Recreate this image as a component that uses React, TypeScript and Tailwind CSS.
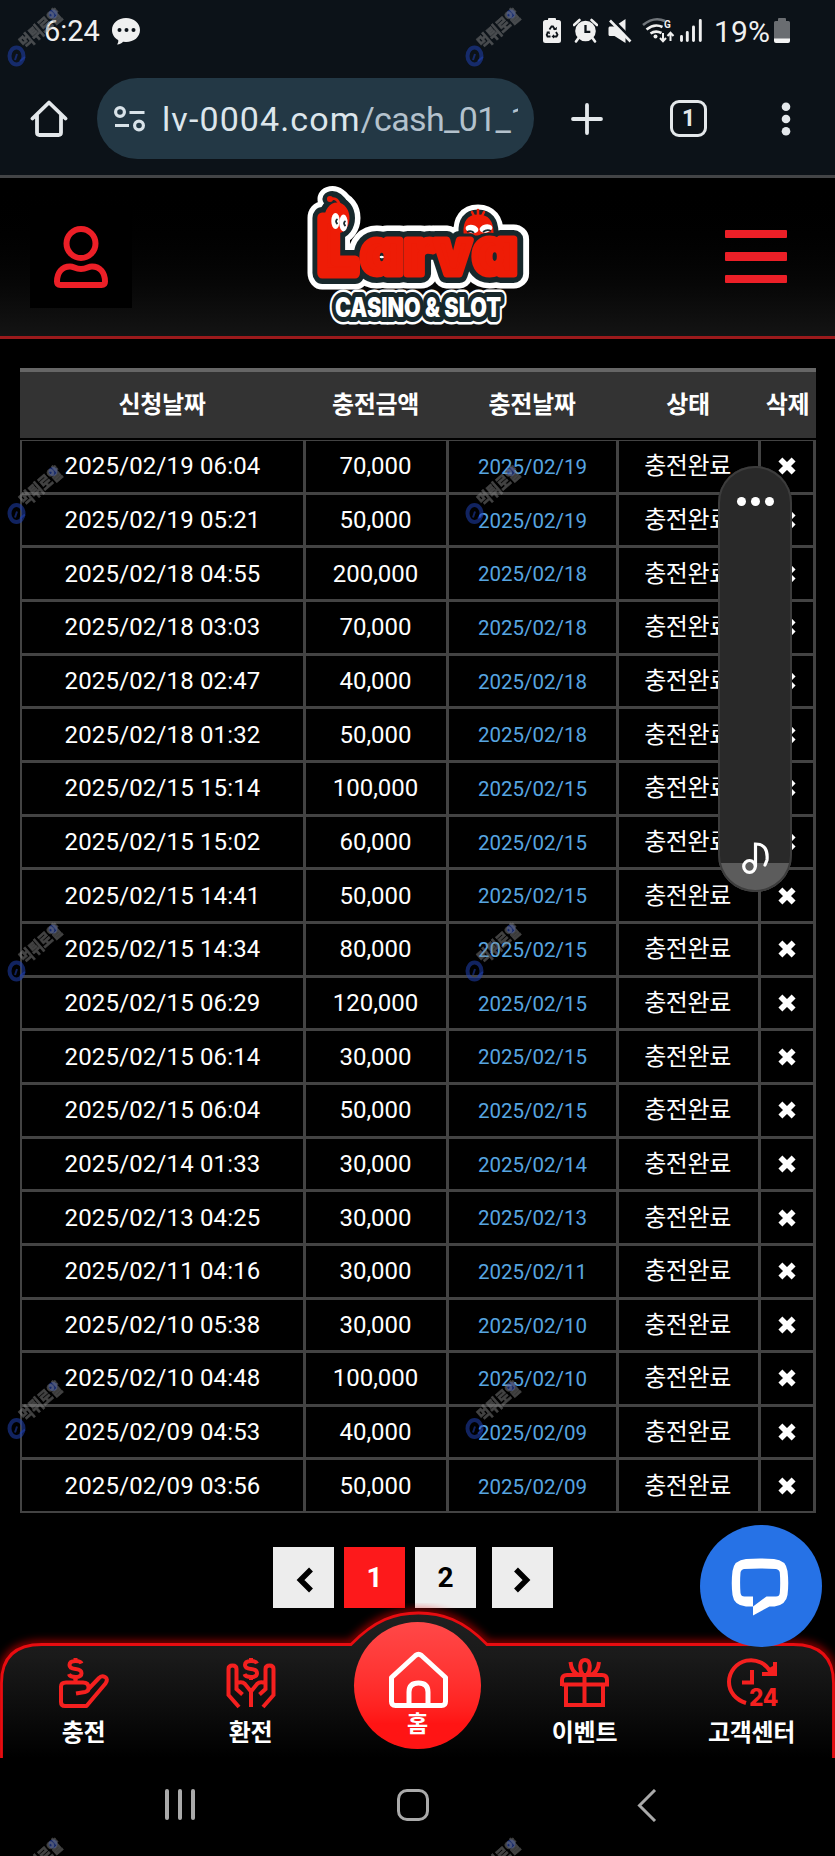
import React from "react";

const rows: [string, string][] = [
  ["2025/02/19 06:04", "70,000"],
  ["2025/02/19 05:21", "50,000"],
  ["2025/02/18 04:55", "200,000"],
  ["2025/02/18 03:03", "70,000"],
  ["2025/02/18 02:47", "40,000"],
  ["2025/02/18 01:32", "50,000"],
  ["2025/02/15 15:14", "100,000"],
  ["2025/02/15 15:02", "60,000"],
  ["2025/02/15 14:41", "50,000"],
  ["2025/02/15 14:34", "80,000"],
  ["2025/02/15 06:29", "120,000"],
  ["2025/02/15 06:14", "30,000"],
  ["2025/02/15 06:04", "50,000"],
  ["2025/02/14 01:33", "30,000"],
  ["2025/02/13 04:25", "30,000"],
  ["2025/02/11 04:16", "30,000"],
  ["2025/02/10 05:38", "30,000"],
  ["2025/02/10 04:48", "100,000"],
  ["2025/02/09 04:53", "40,000"],
  ["2025/02/09 03:56", "50,000"],
];

const COLS = "grid grid-cols-[284px_143px_170px_142px_55px]";

function StatusBar() {
  return (
    <div className="flex h-[62px] items-center text-[29px] leading-none text-[#f0f0f0]">
      <span className="ml-[44px] w-[60px] pt-px">6:24</span>
      <svg className="ml-[8px] h-[28px] w-[28px]" viewBox="112 17 28 28">
        <path d="M126 18c8 0 14 5 14 12s-6 12-14 12l-3-.3c-1 1.400-3 2.500-6 2.800 1-1.200 1.500-2.800 1.200-4.500C114.500 38 112 34.500 112 30c0-7 6-12 14-12z" fill="#f0f0f0" />
        <g fill="#0c1218"><circle cx="119.500" cy="30" r="2" /><circle cx="126.500" cy="30" r="2" /><circle cx="133.500" cy="30" r="2" /></g>
      </svg>
      <svg className="ml-[403px] h-[26px] w-[19px]" viewBox="543 18 19 26">
        <path d="M548 20v-1q0-1 1-1h6q1 0 1 1v1h2.500q2.500 0 2.500 2.500v18q0 2.500-2.500 2.500h-13Q543 43 543 40.500v-18Q543 20 545.500 20z" fill="#f0f0f0" />
        <g fill="none" stroke="#0c1218" strokeWidth="1.800"><path d="M549.500 29.500l2-3h1.500l2 3.200M556 32l1.500 2.800-1 1.700h-3.500M550.500 36.500h-3l-.8-1.700 1.500-2.800" /></g>
        <path d="M553 29.800l3.500.3.600-3.400zM554 34.200v4.400l-2.500-2.200zM546 32l3.400-.8.700 3z" fill="#0c1218" />
      </svg>
      <svg className="ml-[11px] h-[26px] w-[25px]" viewBox="573 18 25 26">
        <circle cx="585.500" cy="31" r="10.300" fill="#f0f0f0" />
        <path d="M574 25l5.500-5M597 25l-5.500-5M578.500 38l-2.500 3.500M592.500 38l2.500 3.500" stroke="#f0f0f0" strokeWidth="2.600" strokeLinecap="round" />
        <path d="M585.500 25v6.800h4.800" fill="none" stroke="#0c1218" strokeWidth="2.300" />
      </svg>
      <svg className="ml-[10px] h-[26px] w-[24px]" viewBox="608 18 24 26">
        <path d="M609.500 26.500h5l11-7.500v24l-11-7h-5q-1-.500-1-1.500v-6.500q0-1 1-1.500z" fill="#f0f0f0" />
        <path d="M611 18l21 21.500" stroke="#0c1218" strokeWidth="3" />
        <path d="M610 20.500l20.500 21" stroke="#f0f0f0" strokeWidth="2.600" />
      </svg>
      <svg className="ml-[10px] h-[28px] w-[33px] overflow-visible" viewBox="642 17 33 28">
        <g fill="none" strokeWidth="2.600">
          <path d="M643 25q11-9 22-4" stroke="#70757a" />
          <path d="M646.500 29.500q8-6.500 16-2.500M650.500 33.500q5-3.500 11-.5" stroke="#f0f0f0" />
          <path d="M663 33v8M660 38l3 3.300 3-3.300M670.500 41v-8M667.500 36l3-3.300 3 3.300" stroke="#f0f0f0" strokeWidth="2" />
        </g>
        <circle cx="655.500" cy="36.500" r="2" fill="#f0f0f0" />
        <text x="664" y="27.500" fontSize="10" fontWeight="700" fill="#f0f0f0">G</text>
      </svg>
      <svg className="ml-[5px] h-[26px] w-[23px]" viewBox="681 18 23 26">
        <path d="M682.500 36.500v4M688.300 32.500v8M694.500 27v13.500M701.300 20.500v20" stroke="#f0f0f0" strokeWidth="2.900" strokeLinecap="round" />
      </svg>
      <span className="ml-[11px] w-[57px] whitespace-nowrap pt-px text-[30px] tracking-[0.200px]">19%</span>
      <svg className="ml-[2px] h-[26px] w-[18px]" viewBox="774 18 18 26">
        <path d="M779 21v-2q0-1 1-1h6q1 0 1 1v2h2.500q1.500 0 1.500 1.500V39h-16V22.500q0-1.500 1.500-1.500z" fill="#6a6d71" />
        <path d="M775 38.500h16V41q0 2-2 2h-12q-2 0-2-2z" fill="#f4f4f4" />
      </svg>
    </div>
  );
}

function Toolbar() {
  return (
    <div className="flex h-[113px] items-center">
      <svg className="ml-[30px] h-[40px] w-[38px]" viewBox="30 99 38 40" fill="none" stroke="#e4e8eb" strokeWidth="3.800" strokeLinejoin="round" strokeLinecap="round">
        <path d="M32.500 118.500L49 102.500l16.500 16M37 115v17.500q0 2.500 2.500 2.500h19q2.500 0 2.500-2.500V115" />
      </svg>
      <div className="ml-[29px] flex h-[81px] w-[437px] items-center rounded-full bg-[#233845]">
        <svg className="ml-[17px] h-[28px] w-[32px]" viewBox="114 105 32 28" fill="none" stroke="#d9e3e9" strokeWidth="3.200">
          <circle cx="120" cy="112" r="4.400" /><path d="M129.500 112.500h15M115 125.500h14" /><circle cx="139" cy="125.500" r="4.400" />
        </svg>
        <div className="ml-[16px] w-[356px] overflow-hidden whitespace-nowrap text-[34px] leading-[48px] tracking-[-0.650px] text-[#b4c2cd]">
          <span className="tracking-[1.100px] text-[#dde6ec]">lv-0004.com</span>/cash_01_1
        </div>
      </div>
      <svg className="ml-[36px] h-[34px] w-[34px]" viewBox="0 0 34 34" stroke="#e4e8eb" strokeWidth="3.800" strokeLinecap="round"><path d="M17 3v28M3 17h28" /></svg>
      <div className="ml-[66px] flex h-[37px] w-[37px] items-center justify-center rounded-[9px] border-[3.500px] border-[#e4e8eb] text-[23px] font-bold leading-none text-[#e4e8eb]">1</div>
      <svg className="ml-[74px] h-[34px] w-[10px]" viewBox="0 0 10 34" fill="#e4e8eb"><circle cx="5" cy="4.800" r="4.300" /><circle cx="5" cy="17" r="4.300" /><circle cx="5" cy="29.200" r="4.300" /></svg>
    </div>
  );
}

function LogoWord({ fill, stroke, width }: { fill: string; stroke: string; width: number }) {
  return (
    <g fill={fill} stroke={stroke} strokeWidth={width} strokeLinejoin="round" strokeLinecap="round" fontFamily="Inter" fontWeight="900" style={{ fontFeatureSettings: "'cv11'" }}>
      <ellipse cx="47" cy="43" rx="9" ry="12" />
      <text x="29" y="98" fontSize="76" textLength="38" lengthAdjust="spacingAndGlyphs" strokeWidth={width + 4}>L</text>
      <text x="71" y="99" fontSize="62" textLength="42" lengthAdjust="spacingAndGlyphs">a</text>
      <text x="114" y="99" fontSize="62" textLength="30" lengthAdjust="spacingAndGlyphs">r</text>
      <text x="145" y="99" fontSize="62" textLength="36" lengthAdjust="spacingAndGlyphs">v</text>
      <text x="183" y="99" fontSize="64" textLength="44" lengthAdjust="spacingAndGlyphs">a</text>
    </g>
  );
}

function LogoFriend({ fill, width }: { fill: string; width: number }) {
  return <path d="M176 58q-1-16 12-16 13 0 13 16z" fill={fill} stroke={fill} strokeWidth={width} strokeLinejoin="round" />;
}

function Logo() {
  return (
    <svg className="h-[158px] w-[260px]" viewBox="0 3 260 158">
      <LogoWord fill="#fff" stroke="#fff" width={29} />
      <LogoFriend fill="#fff" width={25} />
      <path d="M40 24q6-2 12 8" fill="none" stroke="#fff" strokeWidth="25" strokeLinecap="round" />
      <g fontFamily="Inter" fontWeight="900" fontSize="27" strokeLinejoin="round">
        <text x="45" y="142" textLength="166" lengthAdjust="spacingAndGlyphs" fill="#fff" stroke="#fff" strokeWidth="15">CASINO &amp; SLOT</text>
        <text x="45" y="142" textLength="166" lengthAdjust="spacingAndGlyphs" fill="#17282c" stroke="#17282c" strokeWidth="10">CASINO &amp; SLOT</text>
        <text x="45" y="142" textLength="166" lengthAdjust="spacingAndGlyphs" fill="#fff">CASINO &amp; SLOT</text>
      </g>
      <LogoWord fill="#17282c" stroke="#17282c" width={18} />
      <LogoFriend fill="#17282c" width={15} />
      <path d="M40 24q6-2 12 8" fill="none" stroke="#17282c" strokeWidth="15" strokeLinecap="round" />
      <LogoFriend fill="#ee1c06" width={5} />
      <g fill="none" stroke="#17282c" strokeWidth="13" strokeLinejoin="round" fontFamily="Inter" fontWeight="900" style={{ fontFeatureSettings: "'cv11'" }}>
        <text x="145" y="99" fontSize="62" textLength="36" lengthAdjust="spacingAndGlyphs">v</text>
        <text x="183" y="99" fontSize="64" textLength="44" lengthAdjust="spacingAndGlyphs">a</text>
      </g>
      <LogoWord fill="#ee1c06" stroke="#ee1c06" width={7} />
      <g fill="none" stroke="#ee1c06" strokeWidth="2.500" strokeLinecap="round"><circle cx="40" cy="24" r="1.800" fill="#ee1c06" /><path d="M41 24q6-2 9 6M184 41l-2-4M188 40v-5M192 41l2-4" /></g>
      <g fill="#fff"><ellipse cx="45.500" cy="46" rx="4.200" ry="8" /><ellipse cx="53.500" cy="48" rx="4.200" ry="8.500" /><ellipse cx="182" cy="54" rx="6.500" ry="4" transform="rotate(12 182 54)" /><ellipse cx="196" cy="53.500" rx="6.500" ry="4" transform="rotate(-12 196 53.500)" /></g>
      <g fill="none" stroke="#17282c" strokeWidth="1.800"><path d="M47.500 44q-3 2 0 5M55.500 46q-3 2 0 5M177 57q4-2 7 1M193 57q4-3 8-1" /></g>
    </svg>
  );
}

function SiteHeader() {
  return (
    <header className="flex h-[161px] items-center border-b-[3px] border-[#9c1a1c] bg-linear-to-b from-black to-[#141414]">
      <div className="ml-[30px] flex h-[102px] w-[102px] items-center justify-center bg-black">
        <svg className="h-[64px] w-[56px]" viewBox="53 225 56 64" fill="none" stroke="#ec1f27" strokeWidth="6">
          <circle cx="81" cy="243.500" r="14.500" />
          <path d="M70 266.500c4 0 5 2.500 11 2.500s7-2.500 11-2.500c8 0 13 6 13 15q0 3.500-3.500 3.500h-41q-3.500 0-3.500-3.500c0-9 5-15 13-15z" strokeLinejoin="round" />
        </svg>
      </div>
      <div className="ml-[158px]"><Logo /></div>
      <div className="ml-[175px] mb-px flex w-[62px] flex-col gap-[14px]">
        <span className="h-[8.500px] rounded-[1px] bg-[#ec1f27]" />
        <span className="h-[8.500px] rounded-[1px] bg-[#ec1f27]" />
        <span className="h-[8.500px] rounded-[1px] bg-[#ec1f27]" />
      </div>
    </header>
  );
}

function Cell({ children, className = "" }: { children: React.ReactNode; className?: string }) {
  return <div className={"flex items-center justify-center border-r-[3px] border-[#434343] " + className}>{children}</div>;
}

function HistoryTable() {
  return (
    <section className="ml-[20px] mt-[29px] w-[796px]">
      <div className="grid h-[70px] grid-cols-[284px_143px_170px_142px_57px] border-t-[4px] border-[#666] bg-[#333] pt-px text-[24px] font-bold leading-none tracking-[-0.300px]">
        {["신청날짜", "충전금액", "충전날짜", "상태", "삭제"].map((h) => (
          <div key={h} className="flex items-center justify-center whitespace-nowrap pb-px">{h}</div>
        ))}
      </div>
      <div className="mt-[2px] border-l-2 border-t-[1.500px] border-[#434343] text-[24px] leading-none">
        {rows.map(([date, amount], i) => (
          <div key={i} className={COLS + " h-[53.660px] border-b-[3px] border-[#434343] last:h-[53px] last:border-b-2"}>
            <Cell className="tracking-[0.150px]">{date}</Cell>
            <Cell className="pr-px">{amount}</Cell>
            <Cell className="pt-[2px] text-[20.500px] text-[#57a5e0]">{date.slice(0, 10)}</Cell>
            <Cell className="pr-[2px] tracking-[-0.400px]">충전완료</Cell>
            <Cell className="border-r-2">
              <svg className="h-[18px] w-[18px]" viewBox="0 0 18 18" stroke="#fff" strokeWidth="5.600"><path d="M2.400 2.400l13.200 13.200M15.600 2.400L2.400 15.600" /></svg>
            </Cell>
          </div>
        ))}
      </div>
    </section>
  );
}

function Pagination() {
  const box = "flex h-[61px] w-[61px] items-center justify-center bg-[#ededed] text-[28px] font-bold leading-none text-black";
  return (
    <div className="ml-[273px] mt-[34px] flex gap-[10px]">
      <div className={box}><svg className="mt-[4px] ml-[2px] h-[26px] w-[18px]" viewBox="0 0 18 26" fill="none" stroke="#000" strokeWidth="5.500"><path d="M15 2.500L4.500 13 15 23.500" /></svg></div>
      <div className="flex h-[61px] w-[61px] items-center justify-center bg-[#fd191b] text-[28px] font-bold leading-none text-white">1</div>
      <div className={box}>2</div>
      <div className={box + " ml-[6px]"}><svg className="mt-[4px] mr-[2px] h-[26px] w-[18px]" viewBox="0 0 18 26" fill="none" stroke="#000" strokeWidth="5.500"><path d="M3 2.500L13.500 13 3 23.500" /></svg></div>
    </div>
  );
}

const iconProps = { className: "h-[50px] w-[50px] overflow-visible", fill: "none", stroke: "#f5201f", strokeWidth: 4 };

function Dollar({ x, y }: { x: number; y: number }) {
  return (
    <g transform={`translate(${x} ${y})`}>
      <path d="M14 5.500Q13 3 8 3 2 3 2 7q0 3.500 6 4t6 4.200Q14 19 8 19q-5.500 0-6.500-3M8 0v3M8 19v3" />
    </g>
  );
}

function ChargeIcon() {
  return (
    <svg {...iconProps} viewBox="59 1658 50 50">
      <Dollar x={67.500} y={1658} />
      <path d="M75.500 1677v5M76 1693.500l9-1.500q4-.800 3.500-4.500 0-5-5.500-5H66q-5 0-5 4v15.500q0 4 4 4h21.500l19-22.500q3-4.500-.5-6.500t-6 1l-10.500 11" strokeLinejoin="round" />
    </svg>
  );
}

function WithdrawIcon() {
  return (
    <svg {...iconProps} viewBox="226 1658 50 50">
      <Dollar x={243} y={1658} />
      <path d="M239 1707l-10.500-12v-26q0-3.500 4-3.500t4 3.500v17M263 1707l10.500-12v-26q0-3.500-4-3.500t-4 3.500v17M236.500 1681v8l6 5.500M237 1683q5-2 8 1l6 7.500v15.500M265.500 1681v8l-6 5.500M265 1683q-5-2-8 1l-6 7.500" />
    </svg>
  );
}

function GiftIcon() {
  return (
    <svg {...iconProps} viewBox="561 1658 50 50">
      <path d="M563 1686v-6q0-5 5-5h35q5 0 5 5v4.500h-45zM567 1684v21h37v-21M585.500 1675v30M584 1675c-4-5-4-15 2-15s6 10 2 15M571.500 1662q1 11 9 13M600 1662q-1 11-9 13" />
    </svg>
  );
}

function SupportIcon() {
  return (
    <svg {...iconProps} viewBox="728 1658 50 50">
      <path d="M747 1703c-10-3-17-11-17-21a22 22 0 0 1 42-9M776 1662v12h-13M772 1667l4 7M753 1670v12.500h-10" />
      <text x="750" y="1706" fontFamily="Inter" fontSize="24" fontWeight="800" textLength="29" lengthAdjust="spacingAndGlyphs" fill="#f5201f" stroke="none">24</text>
    </svg>
  );
}

function HomeIcon() {
  return (
    <svg className="h-[58px] w-[60px]" viewBox="388 1650 60 58" fill="none" stroke="#fff" strokeWidth="5" strokeLinejoin="round">
      <path d="M391.500 1677.500l24-22q3-2.500 6 0l24 22v24q0 4-4 4h-46q-4 0-4-4zM409 1705v-13q0-9 9.500-9t9.500 9v13" />
    </svg>
  );
}

function BottomNav() {
  const frame = "M1.500 155V80Q1.500 41.500 42 41.500H351C375 17 395 10 418.500 10S463 17 487 41.500H793Q833.500 41.500 833.500 80V155";
  const items = [
    { label: "충전", icon: <ChargeIcon /> },
    { label: "환전", icon: <WithdrawIcon /> },
    null,
    { label: "이벤트", icon: <GiftIcon /> },
    { label: "고객센터", icon: <SupportIcon /> },
  ];
  return (
    <nav className="relative h-[155px] w-full">
      <svg className="absolute inset-0 h-[155px] w-full" viewBox="0 0 835 155">
        <defs>
          <linearGradient id="navFill" x1="0" y1="10" x2="0" y2="155" gradientUnits="userSpaceOnUse"><stop offset="0" stopColor="#202020" /><stop offset="0.300" stopColor="#1a1a1a" /><stop offset="1" stopColor="#000" /></linearGradient>
          <filter id="navGlow" x="-20" y="-20" width="875" height="200" filterUnits="userSpaceOnUse"><feGaussianBlur stdDeviation="4" /></filter>
        </defs>
        <path d={frame} fill="none" stroke="#e00000" strokeWidth="7" filter="url(#navGlow)" opacity="0.750" />
        <path d={frame} fill="url(#navFill)" />
        <path d={frame} fill="none" stroke="#e80c10" strokeWidth="2.800" />
      </svg>
      <div className="relative grid h-full grid-cols-5 text-[24px] font-bold leading-none tracking-[-0.300px]">
        {items.map((it, i) =>
          it ? (
            <div key={i} className="flex flex-col items-center gap-[13px] pt-[55px]">
              {it.icon}
              <span className="whitespace-nowrap">{it.label}</span>
            </div>
          ) : (
            <div key={i} className="flex justify-center pt-[19px]">
              <div className="flex h-[127px] w-[127px] shrink-0 flex-col items-center rounded-full bg-linear-to-b from-[#ff4848] to-[#ff1414] to-80% pt-[28px]">
                <HomeIcon />
                <span className="mt-[5px] text-[23px]">홈</span>
              </div>
            </div>
          )
        )}
      </div>
    </nav>
  );
}

function SystemNav() {
  return (
    <div className="flex h-[95px] items-start bg-black pt-[31px]">
      <div className="ml-[165px] flex h-[31px] gap-[9.500px]">
        <span className="w-[3.500px] rounded-full bg-[#aaa]" /><span className="w-[3.500px] rounded-full bg-[#aaa]" /><span className="w-[3.500px] rounded-full bg-[#aaa]" />
      </div>
      <div className="ml-[202px] h-[32px] w-[32px] rounded-[10px] border-[3px] border-[#aaa]" />
      <svg className="ml-[208px] h-[33px] w-[20px]" viewBox="0 0 20 33" fill="none" stroke="#aaa" strokeWidth="3"><path d="M18 1L2.500 16.500 18 32" /></svg>
    </div>
  );
}

function FloatingPanel() {
  return (
    <div className="absolute left-[718px] top-[466px] flex h-[426px] w-[74px] flex-col items-center overflow-hidden rounded-full bg-[linear-gradient(#292929_397px,#5c5c5c_397px)] ring-2 ring-inset ring-[#3c3c3c]">
      <div className="mt-[31px] flex gap-[5px]">
        <i className="size-[9px] rounded-full bg-white" /><i className="size-[9px] rounded-full bg-white" /><i className="size-[9px] rounded-full bg-white" />
      </div>
      <svg className="mt-[335px] ml-[2px] h-[34px] w-[30px]" viewBox="742 841 30 34" fill="none" stroke="#fff" strokeWidth="3.200" strokeLinecap="round">
        <circle cx="750.500" cy="866.500" r="5.800" /><path d="M756.500 866v-22q13 0 11.500 16l-2 5" />
      </svg>
    </div>
  );
}

function ChatButton() {
  return (
    <div className="absolute left-[700px] top-[1525px] flex size-[122px] items-center justify-center rounded-full bg-[#2672e6]">
      <svg className="mt-[2px] mr-[2px] h-[58px] w-[58px]" viewBox="732 1559 58 58" fill="#fff">
        <path fillRule="evenodd" d="M747 1560q14-1 28 0 12 1 13.500 12 1.500 12 0 24-1.500 10-13 11.500h-5L754 1616.500V1607.500h-7q-12-1-13.500-11.500-1.500-12 0-24Q735 1561 747 1560zm-2 10q-3 .5-3.500 3.500-.8 10 0 20.500.5 3.500 4 3.500H754v10l13.500-10h9.500q3.500 0 3.800-3.500.8-10 0-20.500-.5-3-3.800-3.500-15.500-1.200-32 0z" />
      </svg>
    </div>
  );
}

function Watermark({ x, y }: { x: number; y: number }) {
  return (
    <g transform={`translate(${x} ${y})`}>
      <ellipse cx="16.500" cy="56" rx="7" ry="8.500" fill="none" stroke="#1f3fae" strokeWidth="4" opacity="0.550" />
      <path d="M15 60l2-6M20 61l5-4" stroke="#1f3fae" strokeWidth="2" opacity="0.550" />
      <circle cx="53" cy="14" r="4.500" fill="#1f3fae" opacity="0.600" />
      <text transform="translate(26 50) rotate(-41)" fontSize="17" fontWeight="900" fill="#8a8a8a" stroke="#8a8a8a" strokeWidth="0.500" opacity="0.480" textLength="50" lengthAdjust="spacingAndGlyphs">먹튀로얄</text>
    </g>
  );
}

function Watermarks() {
  return (
    <svg className="pointer-events-none absolute inset-0 h-[1856px] w-[835px]" viewBox="0 0 835 1856">
      {[0, 457.500, 915, 1372.500, 1830].map((y) => [0, 458].map((x) => <Watermark key={x + "-" + y} x={x} y={y} />))}
    </svg>
  );
}

export default function App() {
  return (
    <main className="relative flex h-[1856px] w-[835px] flex-col overflow-hidden bg-black font-[Roboto,'Noto_Sans_CJK_KR',sans-serif] text-white">
      <div className="border-b-[3px] border-[#434446] bg-[#0c1218]">
        <StatusBar />
        <Toolbar />
      </div>
      <SiteHeader />
      <HistoryTable />
      <Pagination />
      <div className="-mt-[5px]">
        <BottomNav />
        <SystemNav />
      </div>
      <FloatingPanel />
      <ChatButton />
      <Watermarks />
    </main>
  );
}
